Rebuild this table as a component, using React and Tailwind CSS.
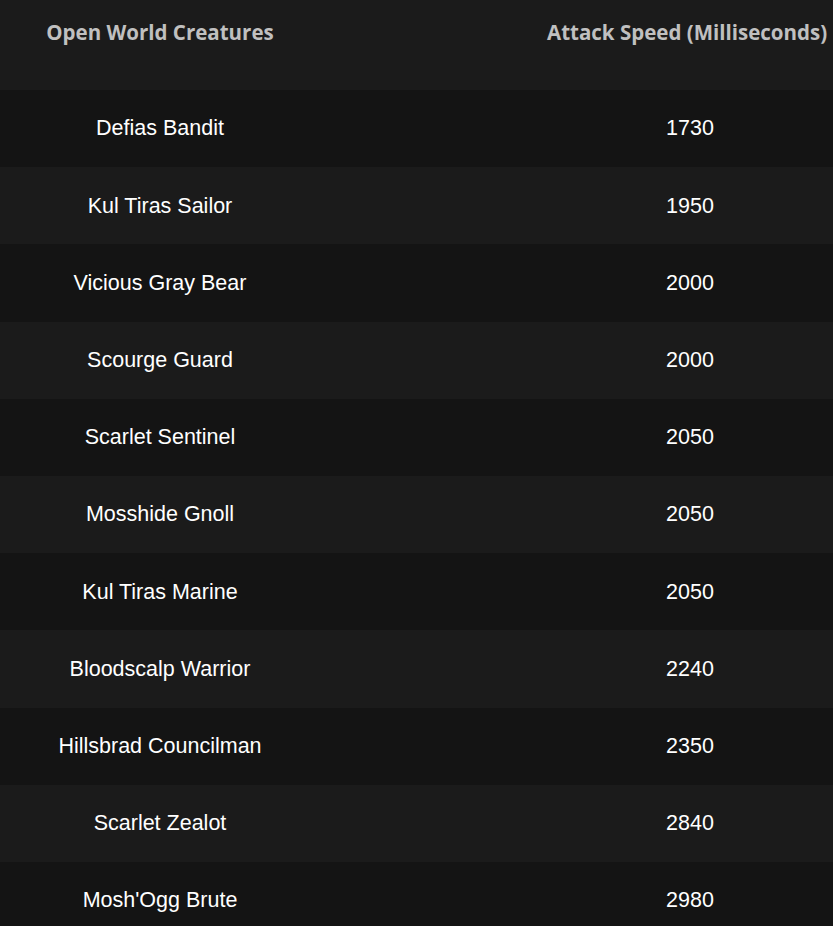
const creatures = [
  { name: "Defias Bandit", speed: 1730 },
  { name: "Kul Tiras Sailor", speed: 1950 },
  { name: "Vicious Gray Bear", speed: 2000 },
  { name: "Scourge Guard", speed: 2000 },
  { name: "Scarlet Sentinel", speed: 2050 },
  { name: "Mosshide Gnoll", speed: 2050 },
  { name: "Kul Tiras Marine", speed: 2050 },
  { name: "Bloodscalp Warrior", speed: 2240 },
  { name: "Hillsbrad Councilman", speed: 2350 },
  { name: "Scarlet Zealot", speed: 2840 },
  { name: "Mosh'Ogg Brute", speed: 2980 },
];

const App = () => {
  return (
    <div className="min-h-screen w-full bg-[#1b1b1b] overflow-hidden">
      <div className="grid grid-cols-[320px_1fr_286px] h-[90px] bg-[#1b1b1b] pt-[18px] font-['Open_Sans',sans-serif] font-bold text-[20.5px] leading-[28px] text-[#c0c0c0]">
        <div className="text-center">Open World Creatures</div>
        <div></div>
        <div className="text-center whitespace-nowrap pr-[6px]">Attack Speed (Milliseconds)</div>
      </div>

      {creatures.map((c, i) => (
        <div
          key={c.name}
          className={
            "grid grid-cols-[320px_1fr_286px] h-[77.2px] items-center font-['Liberation_Sans',Arial,sans-serif] text-[21.5px] text-white " +
            (i % 2 === 0 ? "bg-[#141414]" : "bg-[#1b1b1b]")
          }
        >
          <div className="text-center">{c.name}</div>
          <div></div>
          <div className="text-center">{c.speed}</div>
        </div>
      ))}
    </div>
  );
};

export default App;
